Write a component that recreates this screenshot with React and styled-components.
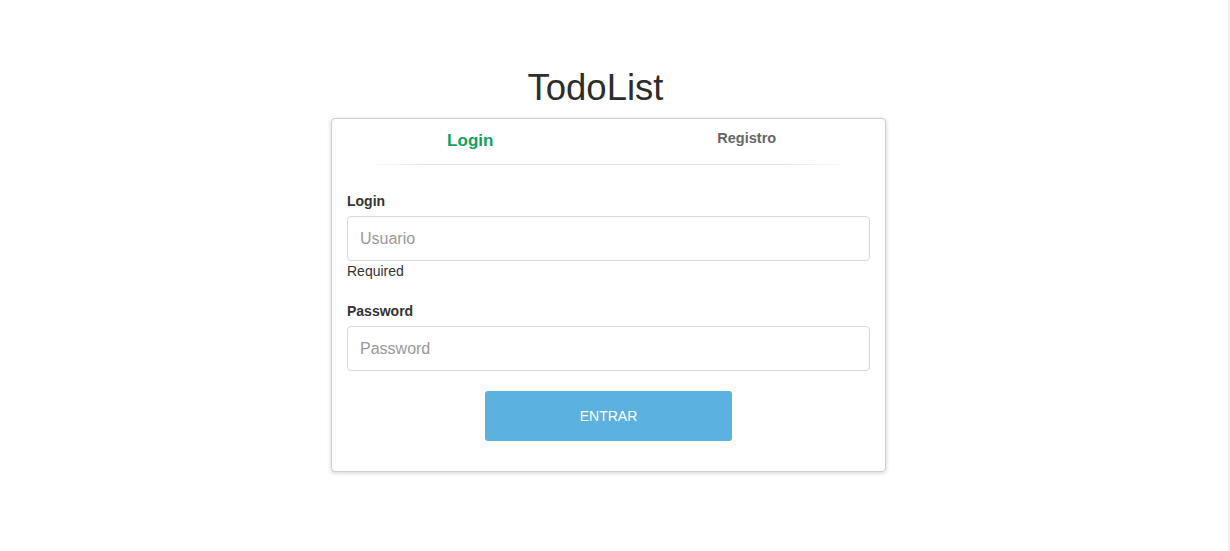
import React from "react";
import styled, { createGlobalStyle } from "styled-components";

const Global = createGlobalStyle`
  html, body { margin: 0; padding: 0; background: #fff; }
  body { font-family: "Liberation Sans", Arial, Helvetica, sans-serif; color: #333; }
  * { box-sizing: border-box; }
`;

const Page = styled.div`
  display: flex;
  min-height: 551px;
`;

const Main = styled.main`
  flex: 1;
  padding-top: 68px;
`;

const EdgeBar = styled.div`
  width: 2px;
  background: #f0f0f0;
`;

const Title = styled.h1`
  margin: 0 0 10px;
  padding-right: 37px;
  text-align: center;
  font-size: 36.5px;
  line-height: 40px;
  font-weight: 400;
  color: #2d2d2d;
`;

const Card = styled.section`
  margin-left: 331px;
  width: 555px;
  height: 354px;
  border: 1px solid #cfcfcf;
  border-radius: 4px;
  box-shadow: 0 1px 4px rgba(0, 0, 0, 0.18);
  background: #fff;
  display: flex;
  flex-direction: column;
`;

const Tabs = styled.nav`
  display: flex;
  align-items: flex-start;
  height: 45px;
`;

const Tab = styled.div`
  flex: 1;
  text-align: center;
  padding-top: ${(p) => (p.$active ? "12px" : "11px")};
  font-weight: 700;
  line-height: 1.2;
  font-size: ${(p) => (p.$active ? "17px" : "14.5px")};
  color: ${(p) => (p.$active ? "#12a05c" : "#666")};
  cursor: pointer;
`;

const Divider = styled.div`
  height: 1px;
  margin: 0 36px 0 38px;
  background: linear-gradient(
    to right,
    rgba(221, 221, 221, 0),
    #e2e2e2 12%,
    #e2e2e2 85%,
    rgba(221, 221, 221, 0)
  );
`;

const Form = styled.form`
  padding: 26px 15px 0;
  display: flex;
  flex-direction: column;
`;

const Label = styled.label`
  display: block;
  font-size: 14px;
  line-height: 20px;
  font-weight: 700;
  color: #333;
  margin-bottom: 5px;
`;

const Input = styled.input`
  display: block;
  width: 100%;
  height: 45px;
  padding: 0 12px;
  font-family: inherit;
  font-size: 16px;
  color: #555;
  border: 1px solid #d9d9d9;
  border-radius: 4px;
  outline: none;
  &::placeholder { color: #999; }
`;

const Help = styled.div`
  font-size: 14px;
  line-height: 20px;
  color: #333;
`;

const Group = styled.div`
  margin-bottom: ${(p) => p.$mb || "20px"};
`;

const Button = styled.button`
  align-self: center;
  width: 247px;
  height: 50px;
  border: none;
  border-radius: 3px;
  background: #5bb1df;
  color: #fff;
  font-family: inherit;
  font-size: 14px;
  letter-spacing: 0;
  cursor: pointer;
`;

export default function App() {
  return (
    <>
      <Global />
      <Page>
        <Main>
          <Title>TodoList</Title>
          <Card>
            <Tabs>
              <Tab $active>Login</Tab>
              <Tab>Registro</Tab>
            </Tabs>
            <Divider />
            <Form onSubmit={(e) => e.preventDefault()}>
              <Group>
                <Label>Login</Label>
                <Input placeholder="Usuario" />
                <Help>Required</Help>
              </Group>
              <Group>
                <Label>Password</Label>
                <Input type="password" placeholder="Password" />
              </Group>
              <Button type="submit">ENTRAR</Button>
            </Form>
          </Card>
        </Main>
        <EdgeBar />
      </Page>
    </>
  );
}
